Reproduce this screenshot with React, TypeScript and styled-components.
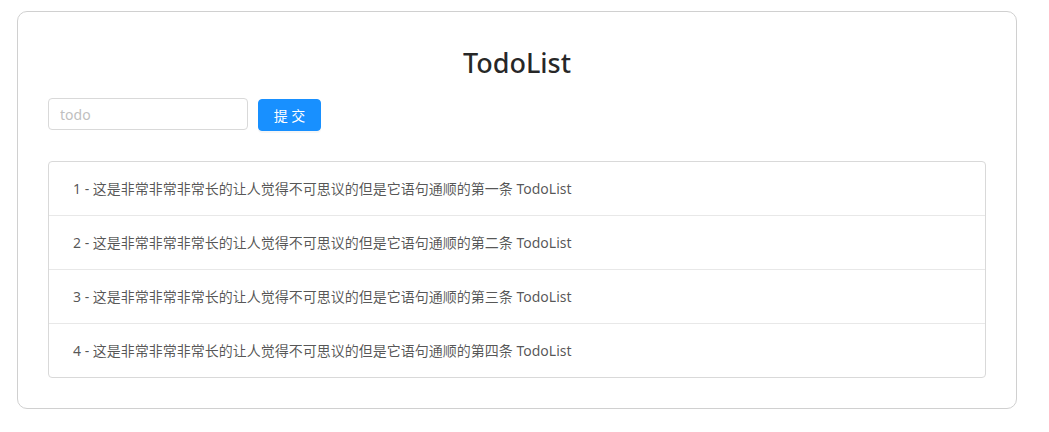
import React, {useState} from 'react';
import styled, {createGlobalStyle} from "styled-components";

// Global
const GlobalStyle = createGlobalStyle`
  body {
    margin: 0;
    background: #fff;
    font-family: "Noto Sans", "Noto Sans CJK SC", sans-serif;
    font-size: 14px;
    color: rgba(0, 0, 0, 0.65);
  }
`

const initialItems = [
    '这是非常非常非常长的让人觉得不可思议的但是它语句通顺的第一条 TodoList',
    '这是非常非常非常长的让人觉得不可思议的但是它语句通顺的第二条 TodoList',
    '这是非常非常非常长的让人觉得不可思议的但是它语句通顺的第三条 TodoList',
    '这是非常非常非常长的让人觉得不可思议的但是它语句通顺的第四条 TodoList',
]

// FC
const App: React.FC = () => {
    const [value, setValue] = useState('')
    const [items, setItems] = useState(initialItems)

    const submit = () => {
        if (!value.trim()) return
        setItems([...items, value])
        setValue('')
    }

    return (
        <StyledPage>
            <GlobalStyle/>
            <StyledCard>
                <StyledTitle>TodoList</StyledTitle>
                <StyledForm>
                    <StyledInput placeholder="todo" value={value}
                                 onChange={e => setValue(e.target.value)}/>
                    <StyledButton onClick={submit}>提 交</StyledButton>
                </StyledForm>
                <StyledList>
                    {items.map((item, i) => (
                        <StyledItem key={i}>{i + 1} - {item}</StyledItem>
                    ))}
                </StyledList>
            </StyledCard>
        </StyledPage>
    );
};

export default App;

// Style
const StyledPage = styled.div`
  padding: 11px 0 20px 17px;
`
const StyledCard = styled.div`
  box-sizing: border-box;
  width: 1000px;
  padding: 30px;
  border: 1px solid #d0d0d0;
  border-radius: 10px;
  background: #fff;
`
const StyledTitle = styled.h2`
  margin: 0 0 14px;
  text-align: center;
  font-size: 27px;
  line-height: 42px;
  font-weight: 500;
  color: rgba(0, 0, 0, 0.85);
`
const StyledForm = styled.div`
  display: flex;
  align-items: flex-start;
  gap: 10px;
  margin-bottom: 30px;
`
const StyledInput = styled.input`
  box-sizing: border-box;
  width: 200px;
  height: 32px;
  padding: 4px 11px;
  border: 1px solid #d9d9d9;
  border-radius: 4px;
  font-family: inherit;
  font-size: 14px;
  color: rgba(0, 0, 0, 0.65);
  outline: none;

  &::placeholder {
    color: #bfbfbf;
  }
`
const StyledButton = styled.button`
  box-sizing: border-box;
  width: 63px;
  height: 32px;
  margin-top: 1px;
  border: 1px solid #1890ff;
  border-radius: 4px;
  background: #1890ff;
  color: #fff;
  font-family: inherit;
  font-size: 14px;
  cursor: pointer;
  box-shadow: 0 2px 0 rgba(0, 0, 0, 0.035);
`
const StyledList = styled.ul`
  margin: 0;
  padding: 0;
  list-style: none;
  border: 1px solid #d9d9d9;
  border-radius: 4px;
`
const StyledItem = styled.li`
  padding: 16px 24px;
  line-height: 21px;
  font-size: 14px;
  color: rgba(0, 0, 0, 0.68);
  border-bottom: 1px solid #e8e8e8;

  &:last-child {
    border-bottom: none;
  }
`
